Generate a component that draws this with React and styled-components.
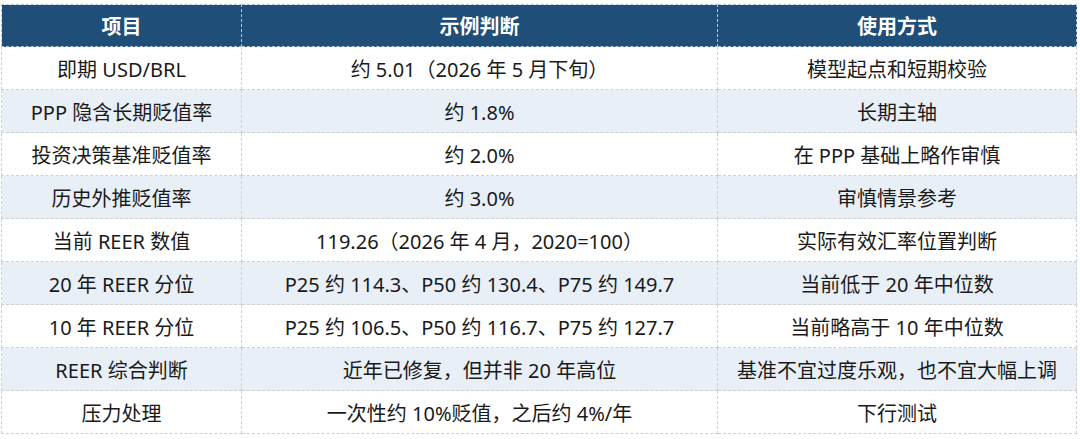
import styled, { createGlobalStyle } from "styled-components";

const GlobalStyle = createGlobalStyle`
  body {
    margin: 0;
    background: #ffffff;
    font-family: "Noto Sans", "Noto Sans CJK SC", sans-serif;
  }
`;

const Page = styled.div`
  padding: 4px 0 0 1px;
`;

const Table = styled.table`
  width: 1075px;
  border-collapse: collapse;
  table-layout: fixed;
  color: #1a1a1a;
  font-size: 20px;
`;

const Th = styled.th`
  height: 41px;
  padding: 0;
  background: #1f4e79;
  color: #ffffff;
  font-weight: 700;
  font-size: 20px;
  text-align: center;
  border: 1px dashed #b8c4d0;
`;

const Row = styled.tr`
  background: ${({ $shaded }) => ($shaded ? "#e8eff7" : "#ffffff")};
`;

const Td = styled.td`
  height: 42px;
  padding: 0;
  text-align: center;
  border: 1px dashed #cfcfcf;
  white-space: nowrap;
`;

const columns = [
  { title: "项目", width: 240 },
  { title: "示例判断", width: 476 },
  { title: "使用方式", width: 359 },
];

const rows = [
  ["即期 USD/BRL", "约 5.01（2026 年 5 月下旬）", "模型起点和短期校验"],
  ["PPP 隐含长期贬值率", "约 1.8%", "长期主轴"],
  ["投资决策基准贬值率", "约 2.0%", "在 PPP 基础上略作审慎"],
  ["历史外推贬值率", "约 3.0%", "审慎情景参考"],
  ["当前 REER 数值", "119.26（2026 年 4 月，2020=100）", "实际有效汇率位置判断"],
  ["20 年 REER 分位", "P25 约 114.3、P50 约 130.4、P75 约 149.7", "当前低于 20 年中位数"],
  ["10 年 REER 分位", "P25 约 106.5、P50 约 116.7、P75 约 127.7", "当前略高于 10 年中位数"],
  ["REER 综合判断", "近年已修复，但并非 20 年高位", "基准不宜过度乐观，也不宜大幅上调"],
  ["压力处理", "一次性约 10%贬值，之后约 4%/年", "下行测试"],
];

export default function App() {
  return (
    <>
      <GlobalStyle />
      <Page>
        <Table>
          <colgroup>
            {columns.map((c) => (
              <col key={c.title} style={{ width: c.width }} />
            ))}
          </colgroup>
          <thead>
            <tr>
              {columns.map((c) => (
                <Th key={c.title}>{c.title}</Th>
              ))}
            </tr>
          </thead>
          <tbody>
            {rows.map((r, i) => (
              <Row key={r[0]} $shaded={i % 2 === 1}>
                {r.map((cell, j) => (
                  <Td key={j}>{cell}</Td>
                ))}
              </Row>
            ))}
          </tbody>
        </Table>
      </Page>
    </>
  );
}
